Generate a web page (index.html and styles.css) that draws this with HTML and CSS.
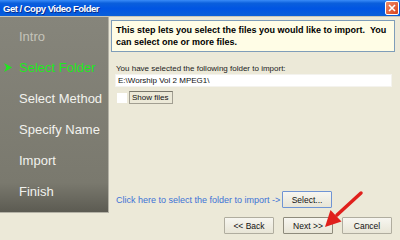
FILE: index.html
```html
<!DOCTYPE html>
<html lang="en">
<head>
    <meta charset="UTF-8">
    <title>Get / Copy Video Folder</title>
    <link rel="stylesheet" href="styles.css">
</head>
<body>
    <div class="window">
        <!-- Title bar -->
        <div class="titlebar">
            <span class="title">Get / Copy Video Folder</span>
            <span class="close-btn">
                <svg width="8" height="8" viewBox="0 0 8 8"><path d="M1 1 L7 7 M7 1 L1 7" stroke="#fff" stroke-width="1.6"/></svg>
            </span>
        </div>

        <div class="content">
            <!-- Wizard steps -->
            <div class="steps">
                <div class="step done">Intro</div>
                <div class="step current">
                    <svg class="marker" width="8" height="9" viewBox="0 0 8 9"><path d="M0 0 L8 4.5 L0 9 L2.5 4.5 Z" fill="#1ee81e"/></svg>
                    Select Folder
                </div>
                <div class="step">Select Method</div>
                <div class="step">Specify Name</div>
                <div class="step">Import</div>
                <div class="step">Finish</div>
            </div>

            <!-- Step body -->
            <div class="main">
                <div class="info-box">
                    This step lets you select the files you would like to import.&nbsp; You can select one or more files.
                </div>

                <div class="field-label">You have selected the following folder to import:</div>
                <div class="path-input">E:\Worship Vol 2 MPEG1\</div>
                <div class="check-row">
                    <span class="checkbox"></span>
                    <span class="check-label">Show files</span>
                </div>

                <div class="select-row">
                    <span class="link-text">Click here to select the folder to import -&gt;</span>
                    <button class="btn btn-focus">Select...</button>
                </div>

                <div class="nav-row">
                    <button class="btn">&lt;&lt; Back</button>
                    <button class="btn btn-next">Next &gt;&gt;</button>
                    <button class="btn">Cancel</button>
                </div>
            </div>
        </div>

        <!-- Red annotation arrow -->
        <svg class="pointer" width="60" height="50" viewBox="0 0 60 50">
            <path d="M43 5 L19 27" stroke="#e0201c" stroke-width="3.5" stroke-linecap="round"/>
            <path d="M7 39 L12.5 22 L23.5 33.5 Z" fill="#e0201c"/>
        </svg>
    </div>
</body>
</html>
```

FILE: styles.css
```css
* {
    margin: 0;
    padding: 0;
    box-sizing: border-box;
}

body {
    font-family: "Liberation Sans", Arial, sans-serif;
    background: #ece9d8;
    overflow: hidden;
}

.window {
    position: relative;
    width: 400px;
    height: 240px;
    display: flex;
    flex-direction: column;
}

.titlebar {
    height: 17px;
    display: flex;
    align-items: center;
    justify-content: space-between;
    padding: 0 1px 0 3px;
    background: linear-gradient(to bottom, #3a8cf8 0%, #0a5fdc 20%, #0055e3 55%, #0a5fd8 100%);
    border-bottom: 1px solid #c8c6b8;
}

.title {
    color: #fff;
    font-size: 9.5px;
    font-weight: bold;
    letter-spacing: -0.5px;
    text-shadow: 1px 1px 0 #0a2d8a;
}

.close-btn {
    width: 14px;
    height: 14px;
    display: flex;
    align-items: center;
    justify-content: center;
    border: 1px solid #fff;
    border-radius: 2px;
    background: linear-gradient(135deg, #f08a68, #d8431c);
}

.content {
    flex: 1;
    display: flex;
}

.steps {
    width: 109px;
    height: 196px;
    padding-top: 12px;
    display: flex;
    flex-direction: column;
    gap: 16px;
    background: linear-gradient(to bottom, #86857b 0%, #7a796e 85%, #5c5b52 100%);
    border-right: 1px solid #b4b2a6;
    border-bottom: 1px solid #b4b2a6;
}

.step {
    position: relative;
    padding-left: 19px;
    height: 15px;
    line-height: 15px;
    font-size: 13px;
    color: #f2f2ee;
}

.step.done {
    color: #c4c3b9;
}

.step.current {
    color: #1ee81e;
}

.marker {
    position: absolute;
    left: 4px;
    top: 3px;
}

.main {
    flex: 1;
    display: flex;
    flex-direction: column;
    padding: 3px 5px 0 2px;
}

.info-box {
    height: 32px;
    padding: 3px 4px 0 4px;
    background: #fffde6;
    border: 1px solid #7f9db9;
    font-size: 9px;
    font-weight: bold;
    line-height: 12px;
    color: #000;
}

.field-label {
    margin-top: 12px;
    padding-left: 5px;
    font-size: 8px;
    color: #222;
}

.path-input {
    margin: 1px 3px 0 4px;
    height: 13px;
    line-height: 12px;
    padding-left: 2px;
    background: #fff;
    border: 1px solid #f4f3ee;
    font-size: 8px;
    color: #111;
}

.check-row {
    margin-top: 4px;
    display: flex;
    align-items: center;
    padding-left: 6px;
    gap: 2px;
}

.checkbox {
    width: 10px;
    height: 10px;
    background: #fff;
}

.check-label {
    width: 44px;
    height: 13px;
    padding-left: 2px;
    border: 1px solid #a29f92;
    border-top-color: #7a786c;
    font-size: 8px;
    line-height: 11px;
    color: #111;
}

.select-row {
    margin-top: auto;
    display: flex;
    align-items: center;
    justify-content: space-between;
    padding: 0 63px 0 5px;
}

.link-text {
    font-size: 9px;
    color: #3d72d6;
}

.nav-row {
    display: flex;
    justify-content: flex-end;
    gap: 9px;
    padding: 9px 3px 6px 0;
}

.btn {
    width: 50px;
    height: 17px;
    font-family: "Liberation Sans", Arial, sans-serif;
    font-size: 8.5px;
    color: #111;
    background: linear-gradient(to bottom, #f7f6f0, #e8e5d6);
    border: 1px solid #b0ad9f;
    border-radius: 1px;
}

.btn-focus {
    border-color: #6f94d4;
}

.btn-next {
    border-color: #8e8b7c;
}

.pointer {
    position: absolute;
    left: 318px;
    top: 188px;
}
```
